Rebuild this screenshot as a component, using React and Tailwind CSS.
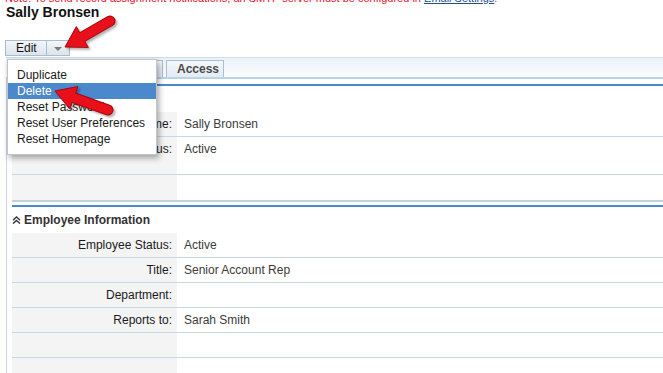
import React from 'react';

const sans = "font-['Liberation_Sans',Arial,sans-serif]";

const menuItems = ['Duplicate', 'Delete', 'Reset Password', 'Reset User Preferences', 'Reset Homepage'];

const userRows = [
  { label: 'Full Name:', value: 'Sally Bronsen', h: 'h-[25px]' },
  { label: 'Status:', value: 'Active', h: 'h-[38px]' },
];

const employeeRows = [
  { label: 'Employee Status:', value: 'Active' },
  { label: 'Title:', value: 'Senior Account Rep' },
  { label: 'Department:', value: '' },
  { label: 'Reports to:', value: 'Sarah Smith' },
  { label: '', value: '' },
  { label: '', value: '' },
];

// red callout arrow, drawn from tail to tip
const Arrow = ({ tail, tip }) => {
  const dx = tip[0] - tail[0];
  const dy = tip[1] - tail[1];
  const len = Math.hypot(dx, dy);
  const ux = dx / len;
  const uy = dy / len;
  const nx = -uy;
  const ny = ux;
  const headLen = 20;
  const headW = 12;
  const bx = tip[0] - ux * headLen;
  const by = tip[1] - uy * headLen;
  const head = [
    [tip[0], tip[1]],
    [bx + nx * headW, by + ny * headW],
    [bx - nx * headW, by - ny * headW],
  ]
    .map((p) => p.join(','))
    .join(' ');
  const sx = bx + ux * 3;
  const sy = by + uy * 3;
  return (
    <g>
      <line x1={tail[0]} y1={tail[1]} x2={sx} y2={sy} stroke="#a8060c" strokeWidth="11" strokeLinecap="round" />
      <polygon points={head} fill="#e8101a" stroke="#a8060c" strokeWidth="1" strokeLinejoin="round" />
      <line x1={tail[0]} y1={tail[1]} x2={sx} y2={sy} stroke="#e8101a" strokeWidth="9" strokeLinecap="round" />
    </g>
  );
};

const SectionHeader = ({ title }) => (
  <div className="h-[28px] flex items-center gap-[3px] border-t-2 border-[#4a89d0]">
    <svg width="9" height="8" viewBox="0 0 9 8" className="shrink-0">
      <path d="M1 4.2 L4.5 1 L8 4.2 M1 7.6 L4.5 4.4 L8 7.6" stroke="#333" strokeWidth="1.3" fill="none" />
    </svg>
    <span className="text-[12px] font-bold text-[#333]">{title}</span>
  </div>
);

const Row = ({ label, value, h = 'h-[25px]' }) => (
  <div className={`flex ${h} border-b border-[#c9d8e6]`}>
    <div className="w-[165px] shrink-0 bg-[#f4f4f4] text-right pr-[5px] text-[12px] leading-[24px] text-[#1a1a1a]">
      {label}
    </div>
    <div className="flex-1 pl-[7px] text-[12px] leading-[24px] text-[#3a3a3a]">{value}</div>
  </div>
);

export default function App() {
  return (
    <div className={`relative w-[663px] h-[373px] overflow-hidden bg-white ${sans}`}>
      <p className="-mt-[8px] h-[12px] pl-[5px] text-[11px] leading-[13px] text-[#e8102c] whitespace-nowrap">
        Note: To send record assignment notifications, an SMTP server must be configured in{' '}
        <span className="text-[#1c4f8c] underline">Email Settings</span>.
      </p>
      <h1 className="pl-[6px] text-[14px] leading-[16px] font-bold text-[#111]">Sally Bronsen</h1>

      <div className="mt-[20px] ml-[5px] flex h-[16px] w-[65px] border border-[#a8bdd2] bg-gradient-to-b from-[#f3f6f9] to-[#dce4ec]">
        <div className="w-[41px] border-r border-[#a8bdd2] flex items-center pl-[10px] text-[12px] text-[#111]">Edit</div>
        <div className="flex-1 flex items-center justify-center pt-[1px]">
          <div className="w-0 h-0 border-l-[4px] border-r-[4px] border-t-[4px] border-l-transparent border-r-transparent border-t-[#7a7a7a]" />
        </div>
      </div>

      <div className="mt-[1px] ml-[6px] h-[22px] border-t border-b-2 border-t-[#cfdeeb] border-b-[#b9d3e9] bg-gradient-to-b from-[#eaf1f8] to-[#fbfdfe] flex items-end pl-[94px] gap-[3px]">
        <div className="w-[63px] h-[17px] border border-b-0 border-[#a9bfd5] bg-gradient-to-b from-[#f4f7fa] to-[#e4ebf2] text-[12px] font-bold text-[#4a4a4a] leading-[16px] pl-[10px]">
          Details
        </div>
        <div className="w-[58px] h-[17px] border border-b-0 border-[#a9bfd5] bg-gradient-to-b from-[#f4f7fa] to-[#e4ebf2] text-[12px] font-bold text-[#4a4a4a] leading-[16px] pl-[10px]">
          Access
        </div>
      </div>

      <div className="ml-[6px] border-l border-[#c5d6e6] pl-[5px] pt-[5px] h-[300px]">
        <SectionHeader title="User Information" />
        {userRows.map((r) => (
          <Row key={r.label} {...r} />
        ))}
        <div className="flex h-[27px] border-b-2 border-[#c3cfdb]">
          <div className="w-[165px] bg-[#f4f4f4]" />
        </div>
        <div className="h-[3px]" />
        <SectionHeader title="Employee Information" />
        {employeeRows.map((r, i) => (
          <Row key={i} {...r} />
        ))}
      </div>

      <div className="absolute left-[7px] top-[59px] w-[150px] h-[96px] bg-white border border-[#c4c4c4] shadow-[2px_3px_6px_rgba(0,0,0,0.35)] pt-[7px]">
        {menuItems.map((item) => (
          <div
            key={item}
            className={`h-[16px] leading-[16px] pl-[9px] text-[12px] whitespace-nowrap ${
              item === 'Delete' ? 'bg-[#4b88cc] text-white' : 'text-[#1a1a1a]'
            }`}
          >
            {item}
          </div>
        ))}
      </div>

      <svg
        className="absolute left-0 top-0 pointer-events-none drop-shadow-[2px_2px_1px_rgba(0,0,0,0.3)]"
        width="663"
        height="373"
      >
        <Arrow tail={[110, 21]} tip={[65, 47]} />
        <Arrow tail={[108, 110]} tip={[55, 91]} />
      </svg>
    </div>
  );
}
